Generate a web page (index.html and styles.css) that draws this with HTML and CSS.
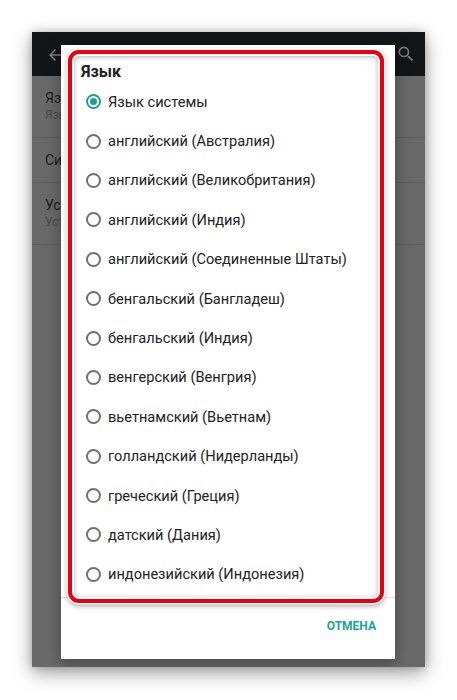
FILE: index.html
```html
<!DOCTYPE html>
<html lang="ru">
<head>
<meta charset="utf-8">
<title>Язык</title>
<link rel="stylesheet" href="styles.css">
</head>
<body>
<div class="stage">
  <div class="phone">
    <div class="appbar">
      <svg class="ic-back" width="18" height="18" viewBox="0 0 24 24"><path d="M20 11H7.8l5.6-5.6L12 4l-8 8 8 8 1.4-1.4L7.8 13H20z" fill="#7a7c7e"/></svg>
      <svg class="ic-search" width="20" height="20" viewBox="0 0 24 24"><path d="M15.5 14h-.8l-.3-.3A6.5 6.5 0 1 0 9.5 16a6.5 6.5 0 0 0 4.2-1.6l.3.3v.8l5 5 1.5-1.5-5-5zm-6 0A4.5 4.5 0 1 1 14 9.5 4.5 4.5 0 0 1 9.5 14z" fill="#7a7c7e"/></svg>
    </div>
    <div class="bg-list">
      <div class="bg-item tall"><div class="bg-title">Язык</div><div class="bg-sub">Язык системы</div></div>
      <div class="bg-item"><div class="bg-title">Система</div></div>
      <div class="bg-item tall"><div class="bg-title">Установки</div><div class="bg-sub">Установки</div></div>
    </div>

    <div class="dialog">
      <div class="dlg-title">Язык</div>
      <div class="options">
        <div class="opt"><span class="radio on"></span><span class="lbl">Язык системы</span></div>
        <div class="opt"><span class="radio"></span><span class="lbl">английский (Австралия)</span></div>
        <div class="opt"><span class="radio"></span><span class="lbl">английский (Великобритания)</span></div>
        <div class="opt"><span class="radio"></span><span class="lbl">английский (Индия)</span></div>
        <div class="opt"><span class="radio"></span><span class="lbl">английский (Соединенные Штаты)</span></div>
        <div class="opt"><span class="radio"></span><span class="lbl">бенгальский (Бангладеш)</span></div>
        <div class="opt"><span class="radio"></span><span class="lbl">бенгальский (Индия)</span></div>
        <div class="opt"><span class="radio"></span><span class="lbl">венгерский (Венгрия)</span></div>
        <div class="opt"><span class="radio"></span><span class="lbl">вьетнамский (Вьетнам)</span></div>
        <div class="opt"><span class="radio"></span><span class="lbl">голландский (Нидерланды)</span></div>
        <div class="opt"><span class="radio"></span><span class="lbl">греческий (Греция)</span></div>
        <div class="opt"><span class="radio"></span><span class="lbl">датский (Дания)</span></div>
        <div class="opt"><span class="radio"></span><span class="lbl">индонезийский (Индонезия)</span></div>
      </div>
      <div class="divider"></div>
      <div class="actions"><span class="btn">ОТМЕНА</span></div>
      <div class="highlight"></div>
    </div>
  </div>
</div>
</body>
</html>
```

FILE: styles.css
```css
html, body {
  margin: 0;
  padding: 0;
  background: #ffffff;
}

body {
  font-family: Roboto, "Noto Sans", "Liberation Sans", sans-serif;
  width: 457px;
  height: 700px;
  overflow: hidden;
}

.stage {
  padding: 32px 0 0 32px;
}

.phone {
  position: relative;
  width: 393px;
  height: 635px;
  background: #696969;
  box-shadow: 0 6px 18px rgba(0, 0, 0, 0.38), 0 0 8px rgba(0, 0, 0, 0.18);
  overflow: hidden;
}

.appbar {
  height: 44px;
  background: #131618;
  display: flex;
  align-items: center;
  justify-content: space-between;
  padding: 0 9px 0 14px;
}

.ic-back {
  margin-top: 2px;
}

.bg-list {
  display: flex;
  flex-direction: column;
}

.bg-item {
  height: 45px;
  border-bottom: 1px solid #5e5e5e;
  display: flex;
  flex-direction: column;
  justify-content: center;
  padding-left: 13px;
  box-sizing: border-box;
}

.bg-item.tall {
  height: 62px;
}

.bg-title {
  font-size: 14px;
  line-height: 18px;
  color: #1c1c1c;
}

.bg-sub {
  font-size: 12px;
  line-height: 17px;
  color: #4a4a4a;
}

.dialog {
  position: absolute;
  left: 29px;
  top: 13px;
  width: 334px;
  height: 614px;
  background: #ffffff;
  box-shadow: 0 4px 14px rgba(0, 0, 0, 0.35);
  display: flex;
  flex-direction: column;
}

.dlg-title {
  padding: 17px 0 0 20px;
  height: 20px;
  line-height: 20px;
  font-size: 16px;
  font-weight: 700;
  color: #212121;
}

.options {
  display: flex;
  flex-direction: column;
}

.opt {
  height: 39.4px;
  display: flex;
  align-items: center;
  padding-left: 25px;
}

.radio {
  width: 15px;
  height: 15px;
  box-sizing: border-box;
  border: 2px solid #707070;
  border-radius: 50%;
  display: flex;
  align-items: center;
  justify-content: center;
  flex: none;
}

.radio.on {
  border-color: #1e9e8f;
}

.radio.on::after {
  content: "";
  width: 7px;
  height: 7px;
  border-radius: 50%;
  background: #1e9e8f;
}

.lbl {
  margin-left: 7px;
  font-size: 14.6px;
  color: #222222;
  white-space: nowrap;
}

.divider {
  margin-top: 3px;
  height: 1px;
  background: #e2e2e2;
}

.actions {
  flex: 1;
  display: flex;
  align-items: center;
  justify-content: flex-end;
  padding: 0 19px 5px 0;
}

.btn {
  font-size: 12px;
  font-weight: 700;
  color: #21a293;
}

.highlight {
  position: absolute;
  left: 7px;
  top: 5px;
  width: 316px;
  height: 553px;
  box-sizing: border-box;
  border: 4px solid #e8000e;
  border-radius: 11px;
  box-shadow: 0 0 0 1.5px #ffffff, 0 2px 5px 1px rgba(0, 0, 0, 0.35),
    inset 0 0 0 2px #ffffff, inset 0 1px 5px 2px rgba(0, 0, 0, 0.3);
  pointer-events: none;
}
```
